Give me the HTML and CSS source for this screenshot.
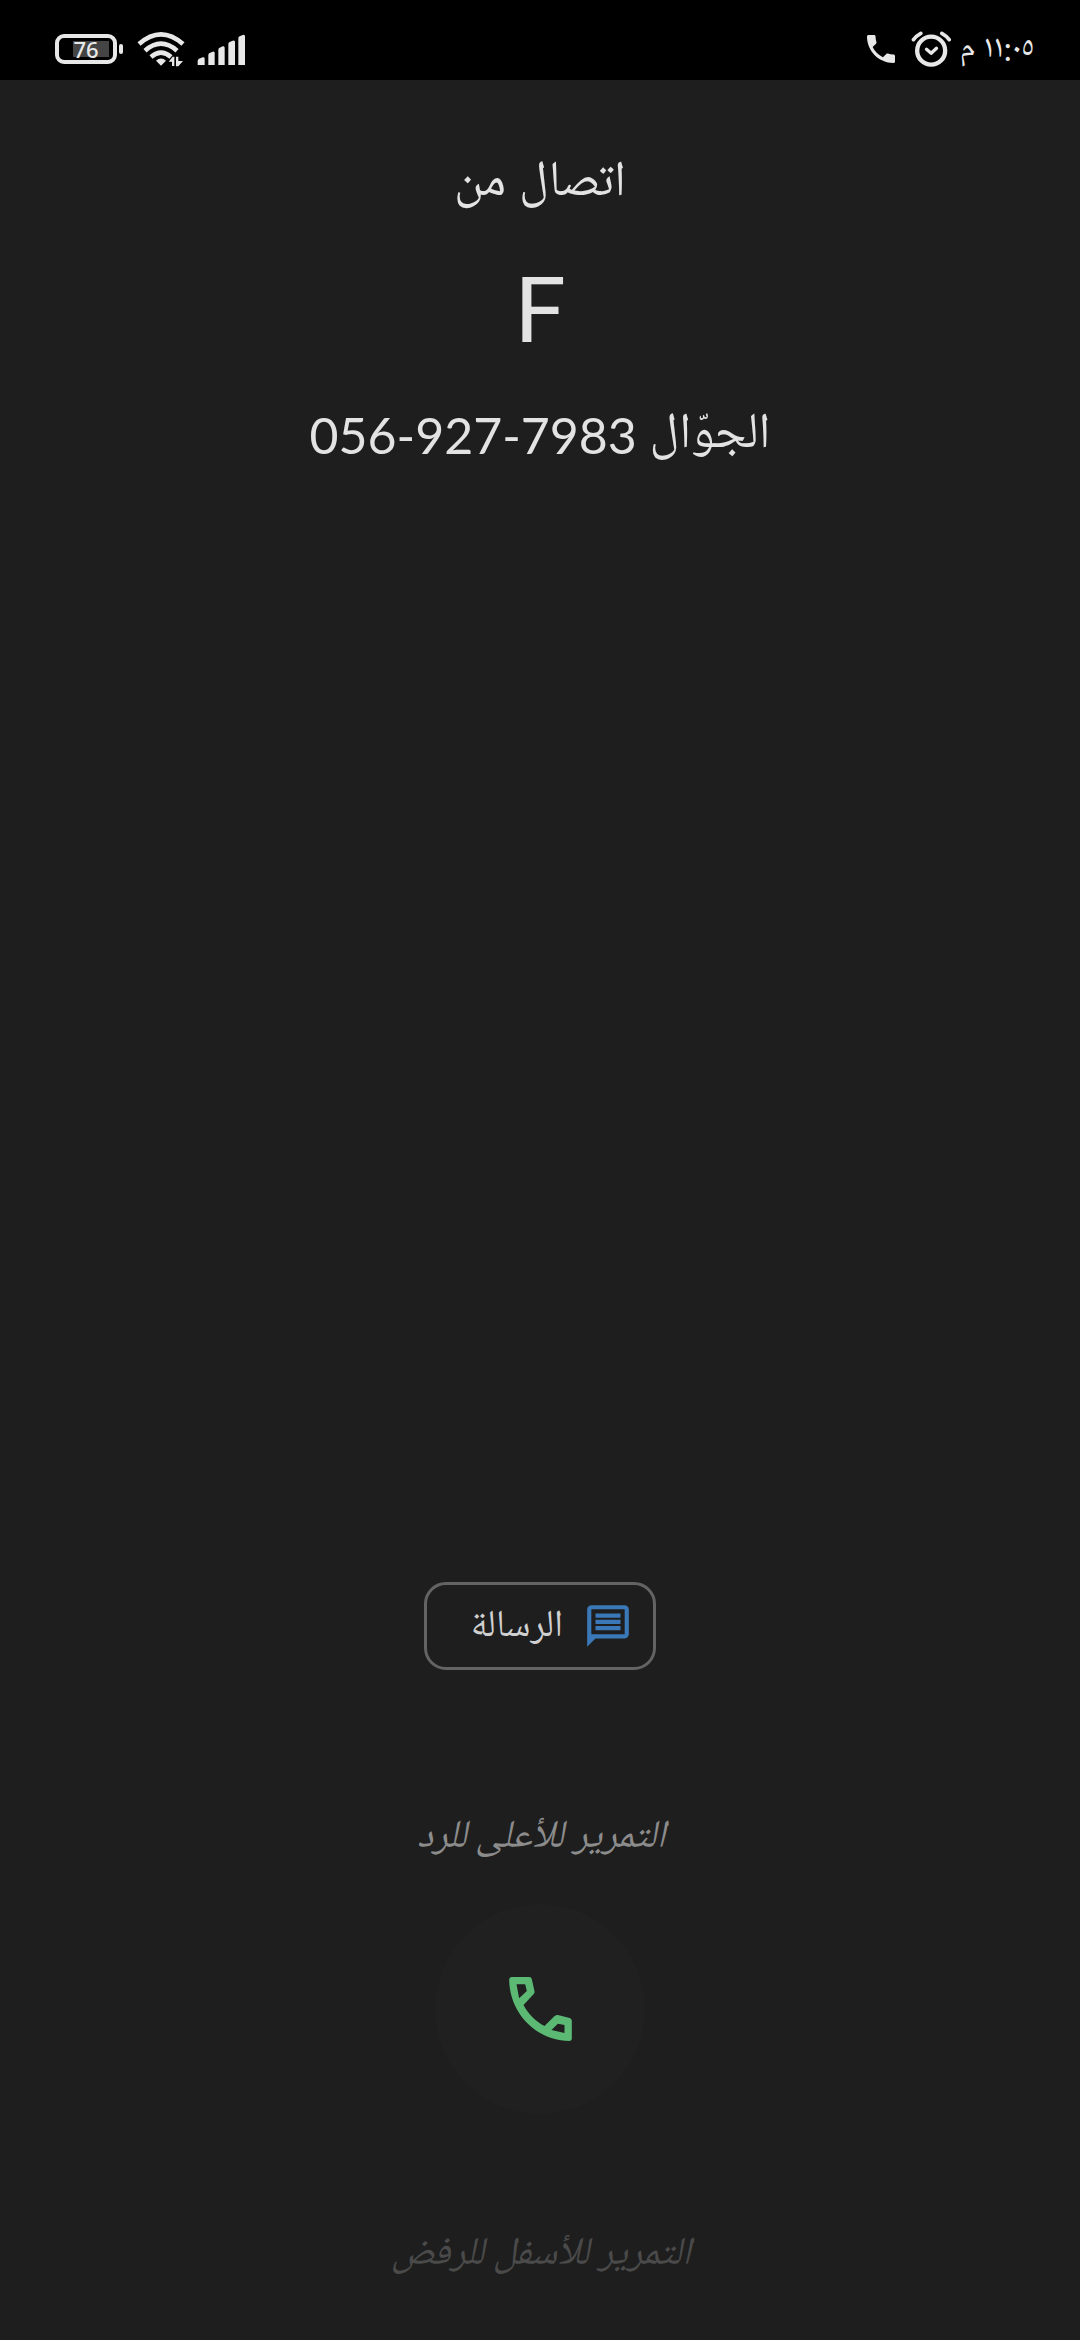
FILE: index.html
```html
<!DOCTYPE html>
<html lang="ar" dir="rtl">
<head>
    <meta charset="UTF-8">
    <meta name="viewport" content="width=device-width, initial-scale=1.0">
    <title>اتصال من F</title>
    <link rel="stylesheet" href="styles.css">
</head>
<body>
    <!-- Status bar -->
    <header class="status-bar">
        <div class="status-group">
            <span class="clock">١١:٠٥ م</span>
            <svg class="alarm-icon" viewBox="205 28 122 114" aria-hidden="true">
                <g fill="none" stroke="currentColor" stroke-linecap="round" stroke-linejoin="round">
                    <circle cx="265" cy="90" r="42" stroke-width="13"/>
                    <path d="M251 86l14 12 16-15" stroke-width="10"/>
                    <path d="M212 57q9-12 22-19M319 57q-9-12-22-19" stroke-width="11"/>
                </g>
            </svg>
            <svg class="phone-icon" viewBox="3 3 18 18" aria-hidden="true">
                <path fill="currentColor" d="M6.62 10.79c1.44 2.83 3.76 5.14 6.59 6.59l2.2-2.2c.27-.27.67-.36 1.02-.24 1.12.37 2.33.57 3.57.57.55 0 1 .45 1 1V20c0 .55-.45 1-1 1-9.39 0-17-7.61-17-17 0-.55.45-1 1-1h3.5c.55 0 1 .45 1 1 0 1.25.2 2.45.57 3.57.11.35.03.74-.25 1.02l-2.2 2.2z"/>
            </svg>
        </div>
        <div class="status-group status-system">
            <div class="battery"><span class="battery-level">76</span></div>
            <svg class="wifi-icon" viewBox="291 35 144 108" aria-hidden="true">
                <g fill="none" stroke="currentColor" stroke-width="14">
                    <path d="M297 74q66-58 132 0"/>
                    <path d="M315 94q48-42 96 0"/>
                    <path d="M333 113q30-26 60 0"/>
                </g>
                <path fill="currentColor" d="M348 124q15-13 30 0l-15 15z"/>
                <path fill="currentColor" d="M386 127l12-15h5v28h-7v-13zM408 112h7v13h14l-14 16h-7z"/>
            </svg>
            <svg class="signal-icon" viewBox="470 41 144 93" aria-hidden="true">
                <path fill="currentColor" d="M472 122q0-5 4-7l11-4q6-2 6 4v19h-21zM504 104q0-4 4-6l9-4q6-2 6 4v36h-19zM534 88q0-4 4-6l9-4q6-2 6 4v52h-19zM564 71q0-4 4-6l9-4q7-2 7 4v69h-20zM594 54q0-4 4-6l9-4q7-2 7 4v86h-20z"/>
            </svg>
        </div>
    </header>

    <main class="call-screen">
        <!-- Caller -->
        <section class="caller">
            <p class="caller-label">اتصال من</p>
            <h1 class="caller-name">F</h1>
            <p class="caller-number">الجوّال <bdi dir="ltr">056-927-7983</bdi></p>
        </section>

        <!-- Actions -->
        <section class="actions">
            <button type="button" class="message-btn">
                <svg class="message-icon" viewBox="0 0 24 24" aria-hidden="true">
                    <path fill="currentColor" d="M4 2h16c1.100 0 2 .9 2 2v12c0 1.100-.9 2-2 2H6l-4 4V4c0-1.100.9-2 2-2zm0 2v12h16V4zm2 8h12v2H6zm0-3h12v2H6zm0-3h12v2H6z"/>
                </svg>
                <span>الرسالة</span>
            </button>
            <p class="hint">التمرير للأعلى للرد</p>
            <button type="button" class="answer-btn" aria-label="الرد">
                <svg class="answer-icon" viewBox="384 585 188 192" aria-hidden="true">
                    <path fill="currentColor" fill-rule="evenodd" d="M392 585H444Q451 585 452 592L460 628Q461 633 457 637L427 669C442 697 463 718 490 732L518 704Q523 698 530 699L563 707Q572 709 572 717V769Q572 777 564 777C465 775 386 695 384 594Q384 585 392 585ZM406 607L414 649L437 627L432 607ZM511 744L550 753V729L530 725Z"/>
                </svg>
            </button>
            <p class="hint hint-decline">التمرير للأسفل للرفض</p>
        </section>
    </main>
</body>
</html>
```
FILE: styles.css
```css
* {
    margin: 0;
    padding: 0;
    box-sizing: border-box;
}

body {
    min-height: 100vh;
    display: flex;
    flex-direction: column;
    font-family: Lato, "Noto Naskh Arabic UI", "Noto Naskh Arabic", "Noto Sans Arabic", sans-serif;
    background-color: #1e1e1e;
    color: #e3e3e3;
}

button {
    font-family: inherit;
    color: inherit;
    cursor: pointer;
}

svg {
    display: block;
}

/* Status bar */
.status-bar {
    height: 80px;
    padding: 18px 46px 0 55px;
    display: flex;
    justify-content: space-between;
    align-items: center;
    background-color: #000;
    color: #e8e8e8;
}

.status-group {
    display: flex;
    align-items: center;
    gap: 8px;
}

.status-system {
    direction: ltr;
    gap: 12px;
}

.clock {
    font-size: 32px;
    line-height: 32px;
}

.alarm-icon {
    width: 41px;
    height: 38px;
}

.phone-icon {
    width: 28px;
    height: 28px;
    margin-right: 8px;
}

/* Battery */
.battery {
    position: relative;
    width: 62px;
    height: 30px;
    margin-right: 8px;
    border: 4px solid #e8e8e8;
    border-radius: 9px;
    display: flex;
    align-items: center;
    justify-content: center;
    background: linear-gradient(#444, #444) 14px center / 36px 16px no-repeat;
}

.battery::after {
    content: "";
    position: absolute;
    left: 60px;
    top: 6px;
    width: 4px;
    height: 10px;
    border-radius: 2px;
    background-color: #e8e8e8;
}

.battery-level {
    font-family: "Noto Sans", sans-serif;
    font-size: 22px;
    line-height: 22px;
    font-weight: 500;
}

.wifi-icon {
    width: 48px;
    height: 36px;
}

.signal-icon {
    width: 48px;
    height: 31px;
}

/* Caller */
.call-screen {
    flex: 1;
    display: flex;
    flex-direction: column;
    justify-content: space-between;
    text-align: center;
}

.caller {
    padding-top: 71px;
}

.caller-label,
.caller-number {
    font-size: 50px;
    line-height: 64px;
}

.caller-name {
    margin: 36px 0 40px;
    font-size: 92px;
    line-height: 112px;
    font-weight: 400;
}

/* Actions */
.actions {
    padding-bottom: 58px;
    display: flex;
    flex-direction: column;
    align-items: center;
}

.message-btn {
    min-width: 232px;
    height: 88px;
    padding: 0 20px;
    display: flex;
    align-items: center;
    gap: 20px;
    border: 3px solid #636363;
    border-radius: 22px;
    background: none;
    font-size: 38px;
    color: #d0d0d0;
}

.message-icon {
    width: 50px;
    height: 50px;
    color: #3a78b8;
}

.hint {
    font-size: 39px;
    line-height: 56px;
    font-style: italic;
    color: #8c8c8c;
}

.message-btn + .hint {
    margin: 139px 0 39px;
}

.answer-btn {
    width: 210px;
    height: 210px;
    display: flex;
    align-items: center;
    justify-content: center;
    border: none;
    border-radius: 50%;
    background-color: #202020;
}

.answer-icon {
    width: 63px;
    height: 64px;
    color: #5bb974;
}

.hint-decline {
    margin-top: 112px;
    color: #4a4a4a;
}
```
